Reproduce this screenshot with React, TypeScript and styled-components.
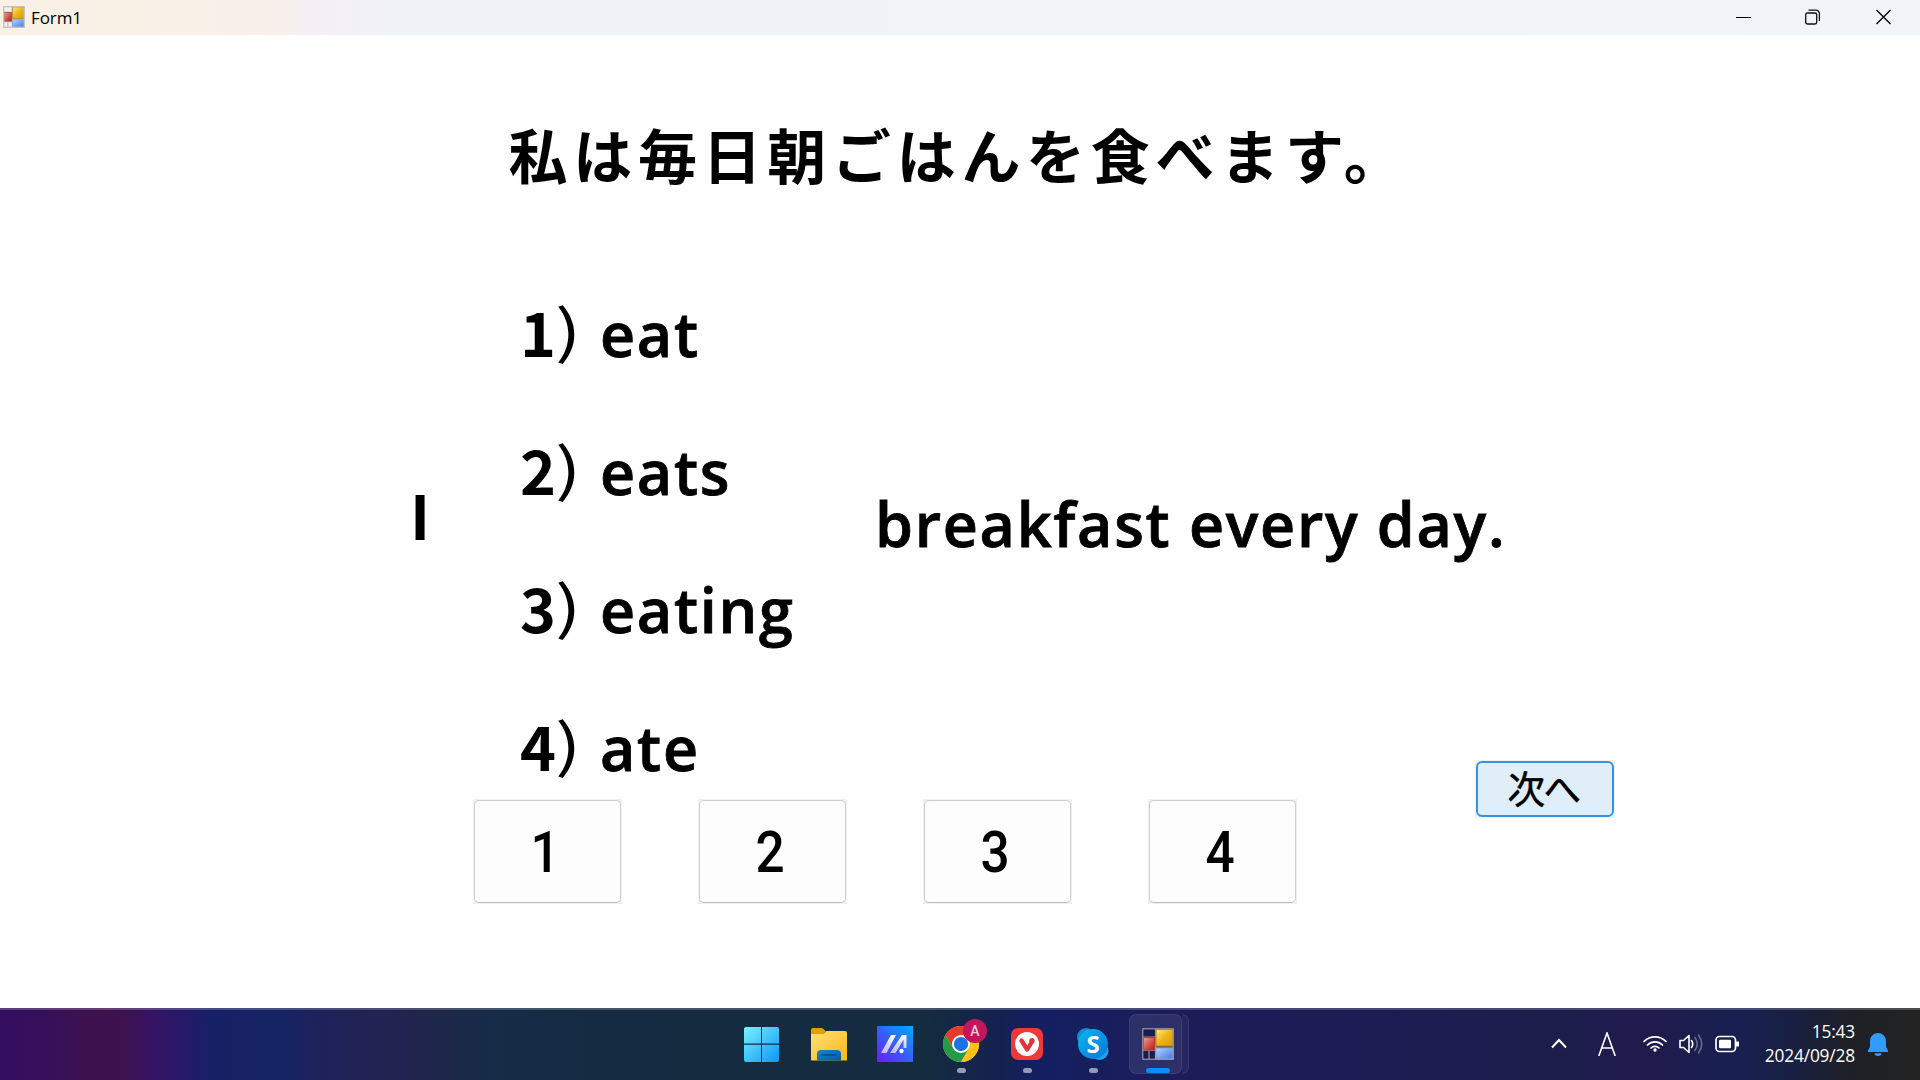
import React from "react";
import styled, { createGlobalStyle } from "styled-components";

const Global = createGlobalStyle`
  * { box-sizing: border-box; }
  body { margin: 0; background: #fff; overflow: hidden; }
`;

const jp = `"Noto Sans CJK JP", sans-serif`;
const ui = `"Open Sans", "Noto Sans", sans-serif`;

const Screen = styled.div`
  width: 1920px;
  height: 1080px;
  display: flex;
  flex-direction: column;
  background: #fefefe;
  color: #000;
`;

const TitleBar = styled.header`
  height: 35px;
  flex: none;
  display: flex;
  align-items: center;
  padding: 0 29px 2px 3px;
  background: linear-gradient(90deg, #f9f1e6 0, #f9f0e7 180px, #f8efeb 270px, #f4eff6 320px, #f0f2f8 400px, #f1f3f9 100%);
`;

const Title = styled.span`
  flex: 1;
  margin-left: 6px;
  font: 400 17px/24px ${ui};
  letter-spacing: -0.1px;
  padding-top: 2px;
`;

const Controls = styled.div`
  display: flex;
  gap: 55px;
  svg { display: block; overflow: visible; }
`;

const Body = styled.main`
  flex: 1;
  min-height: 0;
  display: flex;
  align-items: flex-start;
`;

const Quiz = styled.section`
  width: 1475px;
  display: flex;
  flex-direction: column;
  padding-top: 75px;
  font-family: ${jp};
  font-weight: 700;
`;

const Heading = styled.h1`
  margin: 0 0 88.5px;
  padding-left: 508.5px;
  font-size: 59px;
  line-height: 88px;
  font-weight: 700;
  letter-spacing: 5.7px;
  white-space: nowrap;
`;

const Sentence = styled.div`
  display: grid;
  grid-template-columns: 110px 355px auto;
  padding-left: 410px;
  font-size: 61px;
  line-height: 88px;
  white-space: nowrap;
`;

const Fragment = styled.div<{ $top: number }>`
  padding-top: ${(p) => p.$top}px;
`;

const Options = styled.div`
  display: flex;
  flex-direction: column;
  gap: 50.33px;
`;

const Option = styled.div`
  height: 88px;
`;

const Num = styled.span`
  display: inline-block;
  width: 34.5px;
`;

const Paren = styled.span`
  display: inline-block;
  width: 45.5px;
  font-size: 58px;
  font-weight: 400;
  line-height: 1;
  vertical-align: 4px;
  transform: scaleX(1.35);
  transform-origin: 0 50%;
  margin-top: -4px;
`;

const Latin = styled.span`
  font-family: "Open Sans", sans-serif;
  font-weight: 600;
  font-size: 61px;
  line-height: 1;
  letter-spacing: 1.7px;
  -webkit-text-stroke: 0.8px #000;
`;

const Answers = styled.div`
  display: flex;
  gap: 76px;
  margin: 10px 0 0 473px;
`;

const AnswerButton = styled.button`
  width: 149px;
  height: 105px;
  padding: 0;
  border: 1px solid #f0f0f0;
  background: #f0f0f0;
  display: flex;
`;

const AnswerFace = styled.span`
  flex: 1;
  align-self: stretch;
  display: flex;
  align-items: center;
  justify-content: center;
  padding-right: 5px;
  border: 1px solid #d0d0d0;
  border-bottom-color: #bcbcbc;
  border-radius: 5px;
  background: #fdfdfd;
  font: 500 57px/60px Roboto, sans-serif;
`;

const Digit = styled.span`
  transform: scaleX(0.9);
  padding-top: 2px;
`;

const NextButton = styled.button`
  margin-top: 725px;
  width: 140px;
  height: 58px;
  padding: 0;
  border: 1px solid #f0f0f0;
  background: #f0f0f0;
  display: flex;
`;

const NextFace = styled.span`
  flex: 1;
  align-self: stretch;
  display: flex;
  align-items: center;
  justify-content: center;
  padding: 0 3px 5px 0;
  border: 2px solid #3393de;
  border-radius: 6px;
  background: #e0eef9;
  font: 400 37.5px/50px ${jp};
  letter-spacing: -1.5px;
  -webkit-text-stroke: 0.5px #000;
`;

const Taskbar = styled.footer`
  height: 72px;
  flex: none;
  display: grid;
  grid-template-columns: 730px 1fr auto;
  border-top: 2px solid rgba(255, 255, 255, 0.2);
  background: linear-gradient(90deg, #340f60 0, #36105a 50px, #3c114e 85px, #3d124c 120px, #361363 150px, #241a68 185px, #162165 215px, #162463 280px, #1e225a 320px, #222350 390px, #1e2749 440px, #162c48 490px, #142b41 600px, #142b40 930px, #14234d 990px, #141f61 1035px, #181e5d 1100px, #1c1c58 1200px, #1c1b52 1380px, #1c1e4c 1530px, #1f1b4c 1650px, #172050 1740px, #181f42 1790px, #1f2027 1850px, #222221 1920px) border-box;
`;

const Apps = styled.div`
  grid-column: 2;
  display: flex;
`;

const Launcher = styled.div<{ $shift?: number }>`
  width: 66px;
  height: 70px;
  display: flex;
  flex-direction: column;
  align-items: center;
  position: relative;
  padding-top: 16px;
  padding-right: ${(p) => p.$shift ?? 0}px;
  svg { display: block; overflow: visible; position: relative; }
`;

const ActivePlate = styled.div`
  position: absolute;
  left: 3px;
  top: 4px;
  width: 53px;
  height: 60px;
  border-radius: 7px;
  background: rgba(255, 255, 255, 0.085);
  border: 1px solid rgba(255, 255, 255, 0.07);
`;

const PlateEdge = styled(ActivePlate)`
  left: 45px;
  width: 18px;
  border-left: 0;
  clip-path: inset(0 0 0 11px);
  background: rgba(255, 255, 255, 0.05);
`;

const Running = styled.i<{ $active?: boolean }>`
  width: ${(p) => (p.$active ? 24 : 9)}px;
  height: 5px;
  margin-top: 6px;
  border-radius: 3px;
  background: ${(p) => (p.$active ? "#0a8cff" : "#949bb4")};
  position: relative;
`;

const Badge = styled.span`
  position: absolute;
  left: 35px;
  top: 9px;
  width: 24px;
  height: 24px;
  border-radius: 50%;
  background: #c2185b;
  color: #f3c6d8;
  font: 500 14px/24px Roboto, sans-serif;
  text-align: center;
`;

const Tray = styled.div`
  display: flex;
  align-items: flex-start;
  padding-right: 32px;
  svg { display: block; flex: none; }
`;

const TrayItem = styled.div<{ $top: number; $gap: number }>`
  padding-top: ${(p) => p.$top}px;
  margin-right: ${(p) => p.$gap}px;
`;

const Clock = styled.div`
  width: 92px;
  margin: 10px 13px 0 23px;
  text-align: right;
  color: #fff;
  font: 400 17.3px/24px ${ui};
  letter-spacing: -0.15px;
  white-space: nowrap;
`;

function FormIcon({ size, frame, dark }: { size: number; frame: string; dark?: boolean }) {
  const id = dark ? "d" : "l";
  return (
    <svg width={size} height={size} viewBox="0 0 32 32">
      <defs>
        <linearGradient id={"y" + id} x1="0" y1="0" x2="1" y2="1"><stop offset="0" stopColor="#ffe98a" /><stop offset=".5" stopColor="#eeb515" /><stop offset="1" stopColor="#d89a00" /></linearGradient>
        <linearGradient id={"r" + id} x1="0" y1="0" x2="1" y2="1"><stop offset="0" stopColor="#f49a90" /><stop offset="1" stopColor="#b81a12" /></linearGradient>
        <linearGradient id={"b" + id} x1="0" y1="0" x2="1" y2="1"><stop offset="0" stopColor="#b8d2ff" /><stop offset="1" stopColor="#3c78e6" /></linearGradient>
      </defs>
      <rect x=".5" y=".5" width="31" height="31" fill={dark ? "#1b1b50" : "#f2f0ee"} />
      <path d="M13.5 1v30M1 9h12M1 22.5h12M7 22.5V31M13 19h18" stroke={frame} strokeWidth={dark ? 1.2 : 2} />
      <rect x="14" y="1.5" width="17" height="16.5" fill={`url(#y${id})`} stroke="#a8800c" />
      <rect x="1.5" y="9.5" width="11" height="12.5" fill={`url(#r${id})`} stroke="#b5362e" />
      <rect x="14" y="20" width="17" height="11" fill={`url(#b${id})`} stroke="#7f9fda" />
      <rect x=".75" y=".75" width="30.5" height="30.5" fill="none" stroke={frame} strokeWidth={dark ? 1.2 : 2.5} />
    </svg>
  );
}

const WindowsIcon = () => (
  <svg width="35" height="36" viewBox="0 0 35 36">
    <defs><linearGradient id="win" gradientUnits="userSpaceOnUse" x1="0" y1="0" x2="35" y2="36"><stop offset="0" stopColor="#7af2ff" /><stop offset=".5" stopColor="#43c4fb" /><stop offset="1" stopColor="#0a98fa" /></linearGradient></defs>
    <path fill="url(#win)" d="M2 1h15v16.500H0V3q0-2 2-2zM18 1h15q2 0 2 2v14.500H18zM0 18.800h17V36H2q-2 0-2-2zM18 18.800h17V34q0 2-2 2H18z" />
  </svg>
);

const FolderIcon = () => (
  <svg width="36" height="36" viewBox="0 0 36 36">
    <defs>
      <linearGradient id="fold" x1="0" y1="0" x2="1" y2="1"><stop offset="0" stopColor="#ffdf7a" /><stop offset="1" stopColor="#fbb913" /></linearGradient>
      <linearGradient id="dock" x1="0" y1="0" x2="1" y2="1"><stop offset="0" stopColor="#1686d6" /><stop offset="1" stopColor="#0458a4" /></linearGradient>
    </defs>
    <path fill="#dea002" d="M0 4q0-2 2-2h8q1.500 0 2.500 1l2.500 2.500L12 8H0z" />
    <path fill="url(#fold)" d="M0 8h11q1.500 0 2.500-1l2-2H34q2 0 2 2v27.500H1Q0 34.500 0 33.500z" />
    <path fill="url(#dock)" d="M6 34.500V28q0-4 4-4h16q4 0 4 4v6.500z" />
    <path stroke="#044a86" strokeWidth="1.500" strokeLinecap="round" d="M11 29h14" />
  </svg>
);

const AsusIcon = () => (
  <svg width="36" height="36" viewBox="0 0 36 36">
    <defs>
      <linearGradient id="asus" x1="0" y1="1" x2="1" y2="0"><stop offset="0" stopColor="#6a1cff" /><stop offset=".45" stopColor="#3a58fa" /><stop offset="1" stopColor="#00acff" /></linearGradient>
      <linearGradient id="bar" x1="0" y1="0" x2="0" y2="1"><stop offset="0" stopColor="#fff" /><stop offset="1" stopColor="#c0b4ff" /></linearGradient>
    </defs>
    <rect width="36" height="36" fill="url(#asus)" />
    <path fill="url(#bar)" d="M14 9h5L9.500 27H4zM25 9h4.500v13h-3v-8.500L18.500 27H13z" />
    <circle cx="24.500" cy="25" r="2.200" fill="#fff" />
  </svg>
);

const ChromeIcon = () => (
  <svg width="36" height="36" viewBox="0 0 48 48">
    <circle cx="24" cy="24" r="24" fill="#fbc116" />
    <path fill="#e33b2e" d="M3.200 12A24 24 0 0 1 44.800 12H24L14 30z" />
    <path fill="#269a47" d="M3.200 12A24 24 0 0 0 24 48L34.400 30 24 35 13.600 30z" />
    <path fill="#fbc116" d="M24 48A24 24 0 0 0 44.800 12H24L34.400 30z" />
    <circle cx="24" cy="24" r="12" fill="#fff" />
    <circle cx="24" cy="24" r="9.500" fill="#1a73e8" />
  </svg>
);

const VivaldiIcon = () => (
  <svg width="32" height="36" viewBox="0 0 32 36">
    <rect y="2" width="32" height="32" rx="7" fill="#ef3939" />
    <circle cx="16" cy="18" r="12" fill="#fff" />
    <path fill="none" stroke="#e03638" strokeWidth="4.300" strokeLinecap="round" strokeLinejoin="round" d="M10.500 14.500l5.700 9 4.600-7.500" />
    <circle cx="21" cy="14.700" r="2.700" fill="#e03638" />
  </svg>
);

const SkypeGlyph = styled.div`
  width: 32px;
  height: 36px;
  display: grid;
  place-items: center;
  > * { grid-area: 1 / 1; }
  span { color: #fff; font: 700 24px/30px "Open Sans", sans-serif; position: relative; }
`;

const SkypeIcon = () => (
  <SkypeGlyph>
    <svg width="32" height="36" viewBox="0 0 32 36">
      <defs><linearGradient id="sky" x1="0" y1="0" x2="1" y2="1"><stop offset="0" stopColor="#12b4f2" /><stop offset="1" stopColor="#0078d8" /></linearGradient></defs>
      <circle cx="9" cy="11" r="9" fill="#0d8fd0" />
      <circle cx="22.500" cy="25" r="9" fill="#1ba4ea" />
      <circle cx="16" cy="18" r="15" fill="url(#sky)" />
    </svg>
    <span>S</span>
  </SkypeGlyph>
);

const options = ["eat", "eats", "eating", "ate"];

export default function App() {
  return (
    <Screen>
      <Global />
      <TitleBar>
        <FormIcon size={22} frame="#c4c4c4" />
        <Title>Form1</Title>
        <Controls>
          <svg width="15" height="16"><path d="M1 8.500h15" stroke="#000" /></svg>
          <svg width="16" height="16" fill="none" stroke="#111" strokeWidth="1.300">
            <rect x=".7" y="4" width="11" height="11" rx="1.800" />
            <path d="M3.500 1.200H11a3.400 3.400 0 0 1 3.400 3.400V12" />
          </svg>
          <svg width="15" height="16" stroke="#000" strokeWidth="1.250"><path d="M.5 1l14 14M14.500 1l-14 14" /></svg>
        </Controls>
      </TitleBar>
      <Body>
        <Quiz>
          <Heading>私は毎日朝ごはんを食べます。</Heading>
          <Sentence>
            <Fragment $top={183}>I</Fragment>
            <Options>
              {options.map((word, i) => (
                <Option key={word}>
                  <Num>{i + 1}</Num>
                  <Paren>)</Paren>
                  <Latin>{word}</Latin>
                </Option>
              ))}
            </Options>
            <Fragment $top={190}><Latin>breakfast every day.</Latin></Fragment>
          </Sentence>
          <Answers>
            {options.map((word, i) => (
              <AnswerButton key={word}><AnswerFace><Digit>{i + 1}</Digit></AnswerFace></AnswerButton>
            ))}
          </Answers>
        </Quiz>
        <NextButton><NextFace>次へ</NextFace></NextButton>
      </Body>
      <Taskbar>
        <Apps>
          <Launcher $shift={3}><WindowsIcon /></Launcher>
          <Launcher $shift={1}><FolderIcon /></Launcher>
          <Launcher><AsusIcon /></Launcher>
          <Launcher><ChromeIcon /><Running /><Badge>A</Badge></Launcher>
          <Launcher><VivaldiIcon /><Running /></Launcher>
          <Launcher><SkypeIcon /><Running /></Launcher>
          <Launcher $shift={2}>
            <PlateEdge />
            <ActivePlate />
            <svg width="32" height="36"><g transform="translate(0 2)"><FormIcon size={32} frame="#9a9aa8" dark /></g></svg>
            <Running $active />
          </Launcher>
        </Apps>
        <Tray>
          <TrayItem $top={28} $gap={31}>
            <svg width="16" height="11" fill="none" stroke="#fff" strokeWidth="2"><path d="M1 9.500l7-7.500 7 7.500" /></svg>
          </TrayItem>
          <TrayItem $top={22} $gap={27}>
            <svg width="18" height="24" fill="none" stroke="#fff" strokeWidth="1.600"><path d="M.8 24L9 1l8.200 23M3.800 16h10.400" /></svg>
          </TrayItem>
          <TrayItem $top={24} $gap={12}>
            <svg width="24" height="19" fill="none" stroke="#fff" strokeWidth="1.700" strokeLinecap="round">
              <path d="M1 7.500a15.500 15.500 0 0 1 22 0M4.500 11a10.600 10.600 0 0 1 15 0M8 14a5.800 5.800 0 0 1 8 0" />
              <circle cx="12" cy="16" r="1.700" fill="#fff" stroke="none" />
            </svg>
          </TrayItem>
          <TrayItem $top={24} $gap={12}>
            <svg width="24" height="20" fill="none" stroke="#fff" strokeWidth="1.600" strokeLinecap="round" strokeLinejoin="round">
              <path d="M1 6.500h3.500L10 1.500v17l-5.500-5H1zM12.500 6.500q2.500 3.500 0 7" />
              <path stroke="#6b6b8e" d="M16 3.500q4.500 6.500 0 13M19.500 1q6.500 9 0 18" />
            </svg>
          </TrayItem>
          <TrayItem $top={25} $gap={0}>
            <svg width="25" height="18" fill="none" stroke="#fff" strokeWidth="1.700">
              <rect x="1" y="1.500" width="19.500" height="15" rx="3.500" />
              <rect x="4" y="4.700" width="12" height="8.600" rx="1" fill="#fff" stroke="none" />
              <path strokeWidth="3" d="M22.500 6.500v5" />
            </svg>
          </TrayItem>
          <Clock>15:43<br />2024/09/28</Clock>
          <TrayItem $top={23} $gap={0}>
            <svg width="20" height="23" fill="#2f9dff">
              <path d="M10 0a8 8 0 0 1 8 8v6l2 3.500V19H0v-1.500L2 14V8a8 8 0 0 1 8-8zM6.500 20.300h7a3.500 2.700 0 0 1-7 0z" />
            </svg>
          </TrayItem>
        </Tray>
      </Taskbar>
    </Screen>
  );
}
